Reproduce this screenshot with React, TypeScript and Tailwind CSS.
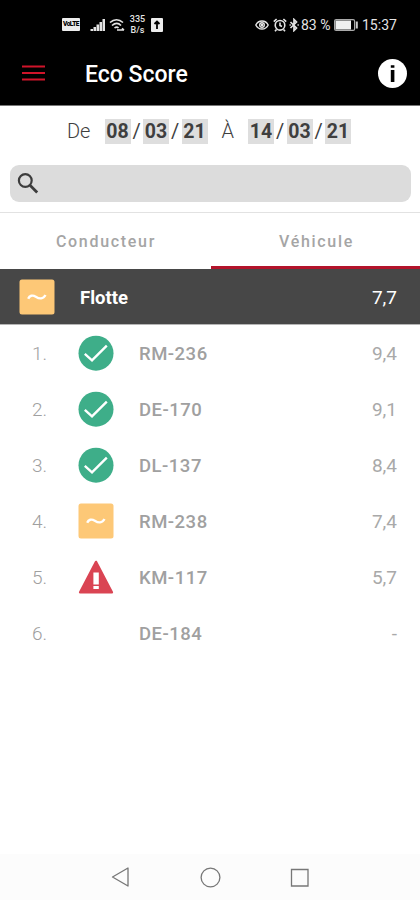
type Status = 'good' | 'medium' | 'bad' | 'none'

const vehicles: { name: string; score: string; status: Status }[] = [
  { name: 'RM-236', score: '9,4', status: 'good' },
  { name: 'DE-170', score: '9,1', status: 'good' },
  { name: 'DL-137', score: '8,4', status: 'good' },
  { name: 'RM-238', score: '7,4', status: 'medium' },
  { name: 'KM-117', score: '5,7', status: 'bad' },
  { name: 'DE-184', score: '-', status: 'none' },
]

const StatusIcon = ({ status }: { status: Status }) => {
  if (status === 'none') return <span className="size-9 shrink-0" />

  return (
    <svg viewBox="0 0 36 36" className="size-9 shrink-0" fill="none" aria-hidden>
      {status === 'good' && (
        <>
          <circle cx="18" cy="18.2" r="17.5" fill="#3eae89" />
          <path d="M6.8 18.8l7.2 6.5L28.8 10.700" stroke="#fff" strokeWidth="2.4" />
        </>
      )}
      {status === 'medium' && (
        <>
          <rect x=".5" y=".5" width="35" height="35" rx="2.5" fill="#fdc877" />
          <path
            d="M9.200 19.800c1.300-3.200 4.300-4.200 7.600-2.100 3.700 2.400 7.400 2.600 9.700-1.700"
            stroke="#fff"
            strokeWidth="2.4"
          />
        </>
      )}
      {status === 'bad' && (
        <>
          <path
            d="M18 3L33.800 33.300H2.200z"
            fill="#da4453"
            stroke="#da4453"
            strokeWidth="2.6"
            strokeLinejoin="round"
          />
          <path d="M15.400 13.500h5.400v12h-5.400zM15.400 27h5.400v3h-5.400z" fill="#fff" />
        </>
      )}
    </svg>
  )
}

const StatusBar = () => (
  <div className="flex h-[49px] items-center pl-[62px] text-[#e4e4e4]">
    <span className="flex h-[13px] w-[18px] items-center justify-center rounded-[1px] bg-[#ededed] text-[6.5px] leading-none font-black tracking-[-0.5px] text-black">
      VoLTE
    </span>
    <svg viewBox="0 0 16 14" className="ml-[10px] h-[14px] w-4" fill="currentColor">
      <path d="M.5 11h2.500v2H.5zM3.500 9H6v4H3.500zM6.500 6.500H9V13H6.500zM9.500 4H12v9H9.500zM12.500 1H15v12h-2.500z" />
    </svg>
    <svg
      viewBox="0 0 16 14"
      className="ml-[3px] h-[14px] w-4"
      fill="none"
      stroke="currentColor"
      strokeWidth="1.6"
    >
      <path d="M1 4.500C5 1 10 1 14 4.500M3 7.500c3-2.600 6.500-2.600 9 0M5.500 10c1.500-1.200 3-1.200 4 0" />
      <path d="M8 12h7M13 10.300l2 1.700" />
    </svg>
    <span className="ml-1 flex w-[17px] flex-col items-center text-[9px] leading-[11px] font-medium">
      <span>335</span>
      <span>B/s</span>
    </span>
    <svg viewBox="0 0 12 14" className="ml-[5px] h-[14px] w-3" fill="none">
      <rect width="12" height="14" rx="1" fill="#ededed" />
      <path d="M6 11V4M3.500 6L6 3.500 8.500 6" stroke="#000" strokeWidth="1.8" />
    </svg>

    <svg
      viewBox="0 0 14 14"
      className="ml-[92px] size-[14px]"
      fill="none"
      stroke="currentColor"
      strokeWidth="1.4"
    >
      <path d="M.8 7C3.500 1.600 10.500 1.600 13.200 7 10.500 12.400 3.500 12.400.8 7z" />
      <circle cx="7" cy="7" r="2.3" />
      <circle cx="7" cy="7" r=".6" />
    </svg>
    <svg
      viewBox="0 0 14 14"
      className="ml-1 size-[14px]"
      fill="none"
      stroke="currentColor"
      strokeWidth="1.6"
    >
      <circle cx="7" cy="7.3" r="4.8" />
      <path d="M7 4.500v3l2 1M.8 3.600L3.600 1M13.200 3.600L10.400 1M3.500 11.500L2 13.300M10.500 11.500l1.500 1.800" />
    </svg>
    <svg
      viewBox="0 0 10 14"
      className="ml-[2px] h-[14px] w-[10px]"
      fill="none"
      stroke="currentColor"
      strokeWidth="1.7"
    >
      <path d="M1.500 4l6 6L5 12.500v-11L7.500 4l-6 6" />
      <path d="M.5 7h1.300M8.500 7h1.300" />
    </svg>
    <span className="ml-[2px] w-[32px] text-[14px] leading-none whitespace-nowrap">83 %</span>
    <svg viewBox="0 0 25 12" className="ml-[1px] h-3 w-[25px]" fill="none">
      <rect x=".6" y=".6" width="20" height="10.8" rx="1.5" stroke="#aaa" strokeWidth="1.2" />
      <rect x="1.5" y="1.5" width="15.5" height="9" fill="#f0f0f0" />
      <path d="M22.800 2.500v7" stroke="#ccc" strokeWidth="2" />
    </svg>
    <span className="ml-[3px] text-[14px] leading-none">15:37</span>
  </div>
)

const DateFields = ({ parts }: { parts: string[] }) => (
  <div className="flex items-center">
    {parts.map((part, i) => (
      <div key={i} className="flex items-center">
        {i > 0 && <span className="w-[12.5px] text-center">/</span>}
        <span className="flex h-[25px] w-[26px] items-center justify-center bg-[#dedede] pt-[2px] text-[19.5px] font-bold">
          {part}
        </span>
      </div>
    ))}
  </div>
)

const App = () => {
  return (
    <div className="flex h-[900px] w-[420px] flex-col bg-white font-[Roboto,sans-serif]">
      <header className="h-[105px] bg-black">
        <StatusBar />
        <div className="flex h-12 items-center pr-[13px] pl-[22px]">
          <svg viewBox="0 0 23 16" className="h-4 w-[23px]" stroke="#d0142a" strokeWidth="2.2">
            <path d="M0 1.500h23M0 8h23M0 14.500h23" />
          </svg>
          <h1 className="ml-10 pt-1 text-[23px] font-medium text-white">Eco Score</h1>
          <svg viewBox="0 0 29 29" className="ml-auto size-[29px]">
            <circle cx="14.5" cy="14.5" r="14.5" fill="#fff" />
            <path d="M12.800 6.200h3.600v2.600h-3.600zM12.800 11h3.600v12h-3.600z" fill="#000" />
          </svg>
        </div>
      </header>

      <div className="h-[108px] border-t border-b border-t-[#777] border-b-[#e2e2e2]">
        <div className="flex h-[50px] items-center pl-[67px] text-[20px] text-[#3f3f3f]">
          <span className="w-[37.5px] font-light">De</span>
          <DateFields parts={['08', '03', '21']} />
          <span className="ml-[14px] w-[26.5px] font-light">À</span>
          <DateFields parts={['14', '03', '21']} />
        </div>
        <div className="mt-[9px] ml-[10px] flex h-[37px] w-[401px] items-center rounded-[9px] bg-[#dcdcdc] pl-[7px]">
          <svg
            viewBox="0 0 22 22"
            className="size-[22px]"
            fill="none"
            stroke="#3c3c3c"
            strokeWidth="2.2"
          >
            <circle cx="8.3" cy="7.5" r="6.4" />
            <path d="M13 12.200l7.200 7.200" strokeWidth="2.8" />
          </svg>
        </div>
      </div>

      <div className="flex h-14 text-[16px] font-medium tracking-[1.7px] text-[#a5a5a5]">
        <div className="flex w-[211px] items-center justify-center pt-px pl-px">Conducteur</div>
        <div className="flex flex-1 items-center justify-center border-b-[3px] border-[#b3142b] pt-1 pl-[2px]">
          Véhicule
        </div>
      </div>

      <div className="flex h-14 items-center border-b border-[#b5b5b5] bg-[#474747] pr-[23px] pl-[19px] text-white">
        <StatusIcon status="medium" />
        <span className="ml-[25px] pt-[5px] text-[18.5px] font-bold">Flotte</span>
        <span className="ml-auto pt-[3px] text-[19px]">7,7</span>
      </div>

      <ol>
        {vehicles.map((vehicle, i) => (
          <li
            key={vehicle.name}
            className="flex h-14 items-center pr-[23px] pl-8 text-[19px] text-[#a0a0a0]"
          >
            <span className="w-[46px] pt-[2px] font-light">{i + 1}.</span>
            <StatusIcon status={vehicle.status} />
            <span className="ml-[25px] pt-[3px] text-[18.5px] font-medium tracking-[0.5px]">
              {vehicle.name}
            </span>
            <span className="ml-auto pt-[2px] text-[#a9a9a9]">{vehicle.score}</span>
          </li>
        ))}
      </ol>

      <nav className="mt-auto flex h-[46px] items-center gap-[70px] bg-[#fcfcfc] pl-[110px]">
        <svg viewBox="0 0 20 22" className="h-[22px] w-5" fill="none" stroke="#777" strokeWidth="1.3">
          <path d="M2.500 11L18 2v18z" strokeLinejoin="round" />
        </svg>
        <svg viewBox="0 0 22 22" className="size-[22px]" fill="none" stroke="#777" strokeWidth="1.3">
          <circle cx="10.5" cy="11.5" r="9.4" />
        </svg>
        <svg viewBox="0 0 20 22" className="-ml-[3px] h-[22px] w-5" fill="none" stroke="#777" strokeWidth="1.3">
          <path d="M2.500 3.500h16.500v16.500H2.500z" />
        </svg>
      </nav>
    </div>
  )
}

export default App
